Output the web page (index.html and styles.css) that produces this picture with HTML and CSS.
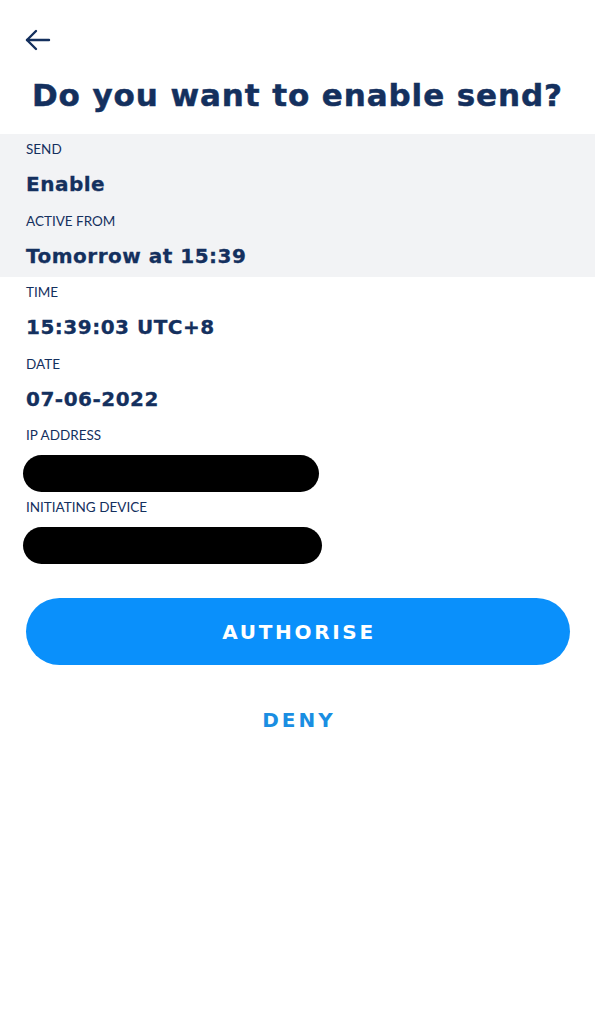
FILE: index.html
```html
<!DOCTYPE html>
<html lang="en">
<head>
    <meta charset="UTF-8">
    <meta name="viewport" content="width=device-width, initial-scale=1.0">
    <title>Enable send</title>
    <link rel="stylesheet" href="styles.css">
</head>
<body>
    <div id="app">
        <div class="top-bar">
            <svg class="back" width="28" height="24" viewBox="0 0 28 24" fill="none" stroke="#14305e" stroke-width="2.4" stroke-linecap="round" stroke-linejoin="round">
                <path d="M25 12H3"/>
                <path d="M12 3L3 12l9 9"/>
            </svg>
        </div>
        <h1 class="title">Do you want to enable send?</h1>

        <div class="details">
            <div class="highlight">
                <div class="field">
                    <div class="label">SEND</div>
                    <div class="value">Enable</div>
                </div>
                <div class="field">
                    <div class="label">ACTIVE FROM</div>
                    <div class="value">Tomorrow at 15:39</div>
                </div>
            </div>
            <div class="field">
                <div class="label">TIME</div>
                <div class="value">15:39:03 UTC+8</div>
            </div>
            <div class="field">
                <div class="label">DATE</div>
                <div class="value">07-06-2022</div>
            </div>
            <div class="field masked">
                <div class="label">IP ADDRESS</div>
                <div class="redacted ip"></div>
            </div>
            <div class="field masked">
                <div class="label">INITIATING DEVICE</div>
                <div class="redacted device"></div>
            </div>
        </div>

        <div class="actions">
            <button class="btn-primary">AUTHORISE</button>
            <button class="btn-link">DENY</button>
        </div>
    </div>
</body>
</html>
```

FILE: styles.css
```css
body {
    font-family: Lato, "Open Sans", sans-serif;
    margin: 0;
    background: #fff;
    color: #14305e;
}

#app {
    width: 595px;
}

.top-bar {
    padding: 28px 0 0 24px;
    height: 24px;
}

.back {
    display: block;
}

.title {
    margin: 0;
    padding: 21px 0 17px;
    font-family: "DejaVu Sans", sans-serif;
    font-size: 31px;
    font-weight: bold;
    letter-spacing: 0.9px;
    text-align: center;
    line-height: 44px;
    -webkit-text-stroke: 0.5px #14305e;
}

.highlight {
    background-color: #f2f3f5;
}

.field {
    padding: 5px 26px 6.5px;
}

.label {
    font-size: 13.5px;
    line-height: 20px;
}

.value {
    margin-top: 10px;
    font-family: "DejaVu Sans", sans-serif;
    font-size: 20px;
    font-weight: bold;
    line-height: 30px;
    letter-spacing: 0.5px;
    -webkit-text-stroke: 0.3px #14305e;
}

.field.masked {
    padding: 5px 0 0;
}

.masked .label {
    padding-left: 26px;
}

.redacted {
    margin-top: 10px;
    height: 37px;
    background: #000;
    border-radius: 19px;
}

.redacted.ip {
    margin-left: 23px;
    width: 296px;
}

.redacted.device {
    margin-left: 23px;
    width: 299px;
}

.actions {
    padding-top: 34px;
    display: flex;
    flex-direction: column;
    align-items: center;
}

button {
    font-family: "DejaVu Sans", sans-serif;
    border: none;
    cursor: pointer;
}

.btn-primary {
    width: 544px;
    height: 67px;
    margin-left: 1px;
    padding: 0 0 0 2px;
    border-radius: 34px;
    background-color: #0a90fb;
    color: #fff;
    font-size: 20px;
    font-weight: bold;
    letter-spacing: 2.7px;
}

.btn-link {
    margin-top: 43px;
    padding: 0 0 0 3px;
    background: none;
    color: #1a8ee2;
    font-size: 20px;
    font-weight: bold;
    letter-spacing: 3px;
    line-height: 24px;
}
```
